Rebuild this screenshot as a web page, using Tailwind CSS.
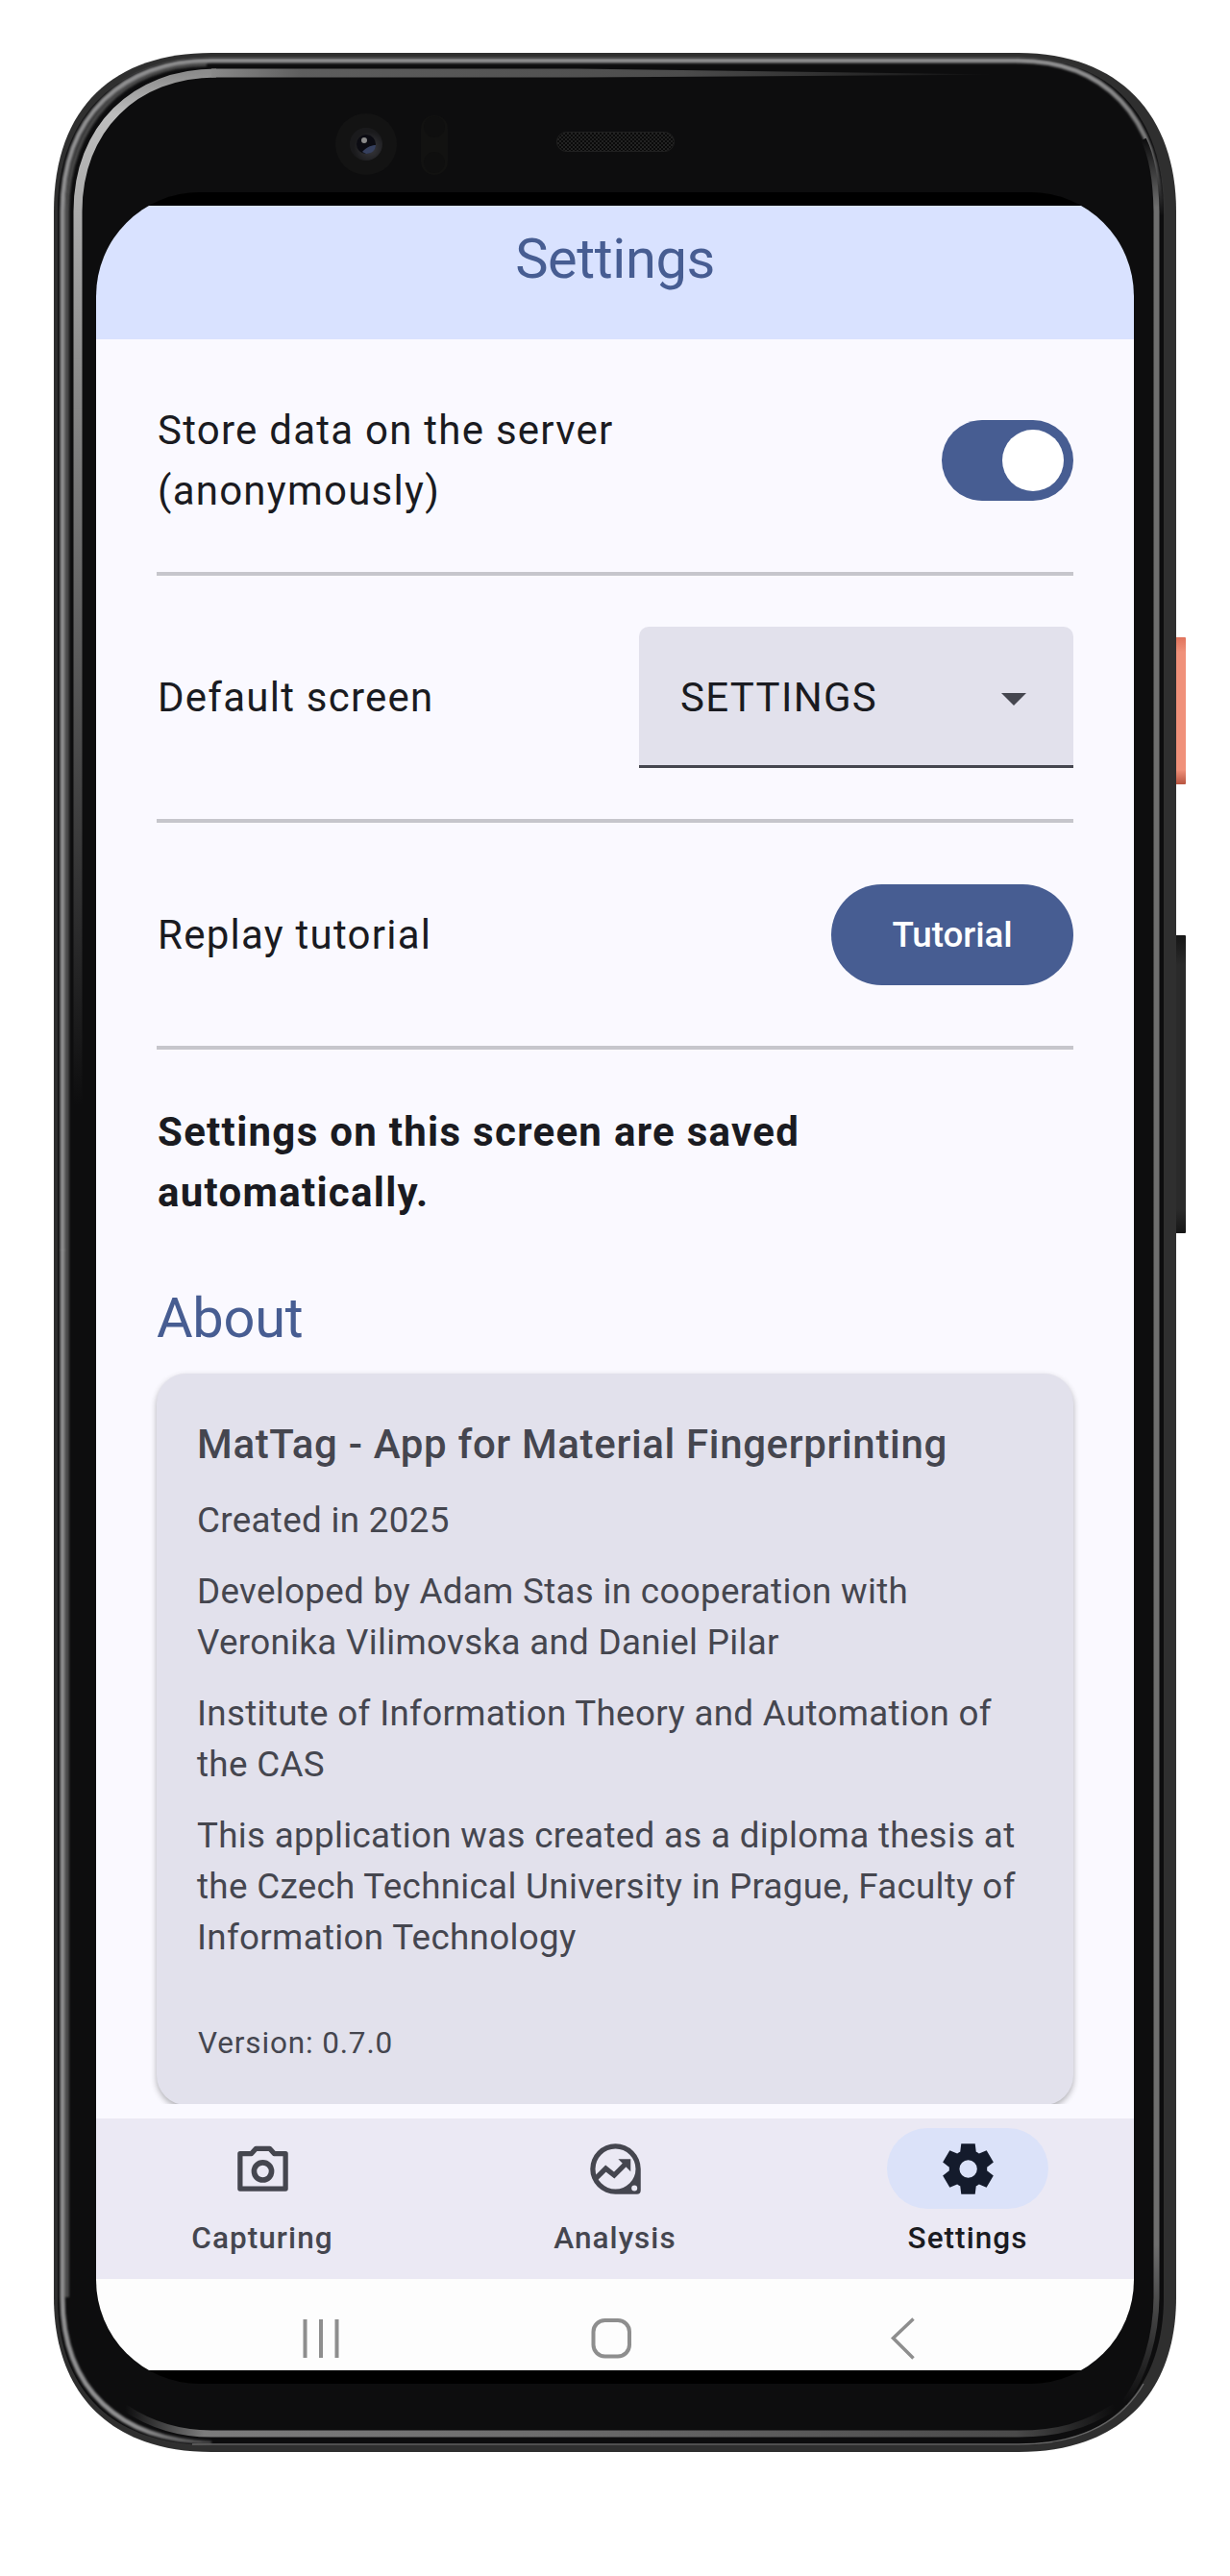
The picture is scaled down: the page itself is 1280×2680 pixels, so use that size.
<!DOCTYPE html>
<html lang="en">
<head>
<meta charset="utf-8">
<title>Settings</title>
<script src="https://cdn.jsdelivr.net/npm/@tailwindcss/browser@4"></script>
</head>
<body class="bg-white font-['Roboto',sans-serif]">
<div class="relative w-[1280px] h-[2680px] overflow-hidden bg-white">

  <!-- Device body: side buttons, frame and reflections -->
  <svg class="absolute inset-0" width="1280" height="2680" viewBox="0 0 1280 2680" fill="none">
    <defs>
      <linearGradient id="power" x1="0" y1="663" x2="0" y2="816" gradientUnits="userSpaceOnUse">
        <stop offset="0" stop-color="#e0735c"/><stop offset=".1" stop-color="#f0917a"/><stop offset=".9" stop-color="#f0917a"/><stop offset="1" stop-color="#b85440"/>
      </linearGradient>
      <linearGradient id="volume" x1="0" y1="973" x2="0" y2="1283" gradientUnits="userSpaceOnUse">
        <stop offset="0" stop-color="#161616"/><stop offset=".1" stop-color="#2a2a2a"/><stop offset=".92" stop-color="#2a2a2a"/><stop offset="1" stop-color="#161616"/>
      </linearGradient>
      <linearGradient id="rimRight" x1="0" y1="70" x2="0" y2="225" gradientUnits="userSpaceOnUse">
        <stop offset="0" stop-color="#8f8f90"/><stop offset=".5" stop-color="#777"/><stop offset="1" stop-color="#777" stop-opacity="0"/>
      </linearGradient>
      <linearGradient id="rimLeft" x1="65" y1="0" x2="225" y2="0" gradientUnits="userSpaceOnUse">
        <stop offset="0" stop-color="#8f8f90"/><stop offset=".5" stop-color="#8f8f90"/><stop offset="1" stop-color="#8f8f90" stop-opacity="0"/>
      </linearGradient>
      <linearGradient id="leftInner" x1="0" y1="76" x2="0" y2="1150" gradientUnits="userSpaceOnUse">
        <stop offset="0" stop-color="#8c8c8c"/><stop offset=".04" stop-color="#bdbdbd"/><stop offset=".3" stop-color="#8a8a8a"/><stop offset="1" stop-color="#0d0d0e"/>
      </linearGradient>
      <linearGradient id="topInner" x1="215" y1="0" x2="1040" y2="0" gradientUnits="userSpaceOnUse">
        <stop offset="0" stop-color="#8c8c8c"/><stop offset=".12" stop-color="#5e5e5e"/><stop offset=".6" stop-color="#4c4c4c"/><stop offset="1" stop-color="#0d0d0e"/>
      </linearGradient>
      <linearGradient id="bottomInner" x1="130" y1="0" x2="1160" y2="0" gradientUnits="userSpaceOnUse">
        <stop offset="0" stop-color="#0d0d0e"/><stop offset=".08" stop-color="#7c7c7c"/><stop offset=".4" stop-color="#6e6e6e"/><stop offset=".9" stop-color="#4a4a4a"/><stop offset="1" stop-color="#0d0d0e"/>
      </linearGradient>
      <linearGradient id="rightInner" x1="0" y1="145" x2="0" y2="2500" gradientUnits="userSpaceOnUse">
        <stop offset="0" stop-color="#0d0d0e"/><stop offset=".03" stop-color="#6e6e6e"/><stop offset=".93" stop-color="#6e6e6e"/><stop offset="1" stop-color="#0d0d0e"/>
      </linearGradient>
      <pattern id="mesh" width="4" height="4" patternUnits="userSpaceOnUse">
        <rect width="4" height="4" fill="#0a0a0a"/><rect width="2" height="2" fill="#222"/><rect x="2" y="2" width="2" height="2" fill="#222"/>
      </pattern>
      <radialGradient id="lens" cx=".62" cy=".62" r=".5"><stop offset="0" stop-color="#3a3a3f"/><stop offset="1" stop-color="#1a1a1c"/></radialGradient>
      <filter id="soft" x="-20%" y="-20%" width="140%" height="140%"><feGaussianBlur stdDeviation="1.2"/></filter>
    </defs>
    <rect x="1222" y="663" width="12" height="153" rx="1" fill="url(#power)"/>
    <rect x="1222" y="973" width="12" height="310" rx="1" fill="url(#volume)"/>
    <path d="M56 220C56 110 120 55 220 55H1060C1165 55 1224 120 1224 220V2390C1224 2490 1165 2551 1060 2551H220C115 2551 56 2490 56 2390Z" fill="#2f2f2f"/>
    <path d="M60 220C60 118 125 60 220 60H1060C1155 60 1211 120 1211 220V2390C1211 2490 1150 2544 1060 2544H220C120 2544 60 2490 60 2390Z" fill="#0d0d0e"/>
    <g filter="url(#soft)">
      <path d="M220 2541C126 2540 65 2486 65 2390V220C65 120 128 63 220 63" stroke="#8f8f90" stroke-width="1"/>
      <path d="M220 2541C126 2540 65 2486 65 2390V1300" stroke="url(#rimLeft)" stroke-width="5"/>
      <path d="M65 1301V220C65 120 128 63 220 63H1060" stroke="#8f8f90" stroke-width="5"/>
      <path d="M1059 63C1148 63 1206 120 1209 225" stroke="url(#rimRight)" stroke-width="5"/>
      <path d="M70 2390V220C70 128 130 67 215 67" stroke="#4a4a4a" stroke-width="4"/>
    </g>
    <path d="M200 2543H1060C1130 2543 1170 2515 1190 2480" stroke="#666" stroke-width="1.5"/>
    <path d="M81 1150V220C81 134 140 76 225 76" stroke="url(#leftInner)" stroke-width="9"/>
    <path d="M220 71.500H600L1040 77.500L600 80.500H220Z" fill="url(#topInner)"/>
    <path d="M1190 145C1200 165 1203 190 1203.500 220V2390C1203 2430 1192 2470 1170 2500" stroke="url(#rightInner)" stroke-width="6"/>
    <path d="M130 2505C160 2525 190 2532 220 2532H1060C1100 2532 1130 2524 1160 2504" stroke="url(#bottomInner)" stroke-width="7"/>
    <circle cx="381" cy="150" r="32" fill="#131313"/>
    <circle cx="381" cy="150" r="17" fill="url(#lens)"/>
    <circle cx="381" cy="150" r="10" fill="#0b0b12"/>
    <path d="M377 158C382 152 388 151 391 151C391 156 387 160 381 160Z" fill="#36405e"/>
    <circle cx="379" cy="146" r="3" fill="#8a8a8a"/>
    <rect x="438" y="120" width="28" height="62" rx="14" fill="#121211"/>
    <circle cx="452" cy="132" r="11" fill="#0f0f0f"/><circle cx="452" cy="169" r="11" fill="#0f0f0f"/>
    <rect x="579.500" y="137.500" width="122" height="20" rx="10" fill="url(#mesh)" stroke="#202020"/>
  </svg>

  <!-- Display -->
  <div class="absolute left-[100px] top-[200px] w-[1080px] h-[2280px] rounded-[108px] overflow-hidden bg-black py-[14px] flex flex-col">
    <header class="h-[139px] shrink-0 bg-[#d9e2ff] flex justify-center pt-[20px]">
      <h1 class="text-[57.750px] leading-[70px] tracking-[-0.400px] text-[#475d92]">Settings</h1>
    </header>

    <main class="h-[1851px] shrink-0 bg-[#faf9ff] px-[63px] text-[#1a1b21]">
      <div class="h-[1836px] -mx-[20px] px-[20px] overflow-hidden">
      <section class="h-[246px] pt-[10px] border-b-4 border-[#c6c6cc] flex items-center justify-between">
        <p class="pl-px text-[42px] leading-[63px] tracking-[1.250px]">Store data on the server<br>(anonymously)</p>
        <div class="w-[137px] h-[84px] rounded-full bg-[#475d92] p-[10px] flex justify-end"><span class="size-[64px] rounded-full bg-white"></span></div>
      </section>
      <section class="h-[257px] border-b-4 border-[#c6c6cc] flex items-center justify-between">
        <p class="pl-px text-[42px] leading-[63px] tracking-[1.250px]">Default screen</p>
        <div class="w-[452px] h-[147px] rounded-t-[10px] bg-[#e2e1ec] border-b-[3px] border-[#45464f] pt-[2px] pl-[43px] pr-[49px] flex items-center justify-between">
          <span class="text-[42px] leading-[63px] tracking-[1.310px]">SETTINGS</span>
          <svg class="mt-1" width="26" height="13" viewBox="0 0 26 13"><path d="M0 0H26L13 13Z" fill="#45464f"/></svg>
        </div>
      </section>
      <section class="h-[236px] border-b-4 border-[#c6c6cc] flex items-center justify-between">
        <p class="pl-px text-[42px] leading-[63px] tracking-[1.250px]">Replay tutorial</p>
        <div class="w-[252px] h-[105px] pt-px rounded-full bg-[#475d92] flex items-center justify-center text-[36.750px] font-medium tracking-[-0.080px] text-white">Tutorial</div>
      </section>
      <p class="pl-px mt-[54px] text-[42px] leading-[63px] tracking-[1.290px] font-bold">Settings on this screen are saved<br>automatically.</p>
      <h2 class="mt-[62px] text-[57.750px] leading-[74px] tracking-[-0.300px] text-[#475d92]">About</h2>
      <article class="mt-[21px] h-[761px] rounded-[31px] bg-[#e2e1ec] shadow-[0_3px_6px_rgba(0,0,0,0.3)] px-[42px] pt-[42px] text-[#45464f]">
        <h3 class="text-[42px] leading-[63px] font-medium tracking-[0.650px]">MatTag - App for Material Fingerprinting</h3>
        <div class="mt-[21px] flex flex-col gap-[21px] text-[36.750px] leading-[53px] tracking-[0.320px] whitespace-nowrap">
          <p>Created in 2025</p>
          <p>Developed by Adam Stas in cooperation with<br>Veronika Vilimovska and Daniel Pilar</p>
          <p>Institute of Information Theory and Automation of<br>the CAS</p>
          <p>This application was created as a diploma thesis at<br>the Czech Technical University in Prague, Faculty of<br>Information Technology</p>
        </div>
        <p class="pl-px mt-[63px] text-[31.500px] leading-[42px] tracking-[0.850px]">Version: 0.7.0</p>
      </article>
      </div>
    </main>

    <nav class="h-[167px] shrink-0 bg-[#ebe9f4] flex gap-[21px] pt-[10px] text-[31.500px] leading-[42px] tracking-[1.050px] font-medium text-[#45464f]">
      <div class="flex-1 flex flex-col items-center gap-[10px]">
        <div class="w-[168px] h-[84px] flex items-center justify-center">
          <svg width="63" height="63" viewBox="0 0 24 24" fill="none" stroke="currentColor" stroke-width="2" stroke-linejoin="round"><path d="M3 5.950H7.500L9.300 3.950H14.700L16.500 5.950H21V19.850H3Z"/><circle cx="12" cy="12.950" r="3.450" stroke-width="2.150"/></svg>
        </div>
        <span>Capturing</span>
      </div>
      <div class="flex-1 flex flex-col items-center gap-[10px]">
        <div class="w-[168px] h-[84px] flex items-center justify-center">
          <svg width="63" height="63" viewBox="0 0 24 24" fill="none" stroke="currentColor"><path fill="currentColor" stroke="none" fill-rule="evenodd" d="M12 2a10 10 0 1 0 0 20h8.500a1.500 1.500 0 0 0 1.500-1.500V12A10 10 0 0 0 12 2Zm0 2a8 8 0 1 1 0 16 8 8 0 0 1 0-16Zm7.500 14.500a1.150 1.150 0 1 1 0 2.300 1.150 1.150 0 0 1 0-2.300Z"/><path d="M4.300 15.700 8.150 11.850 11.500 14.500 16.600 9.400" stroke-width="2"/><path d="M13.100 8.100h4.900V13L16.300 11.300 14.700 9.700Z" fill="currentColor" stroke="none"/></svg>
        </div>
        <span>Analysis</span>
      </div>
      <div class="flex-1 flex flex-col items-center gap-[10px] text-[#1a1b21]">
        <div class="w-[168px] h-[84px] rounded-full bg-[#dbe2f9] flex items-center justify-center text-[#141b2c]">
          <svg width="63" height="63" viewBox="0 0 24 24" fill="currentColor"><path d="m9.250 22-.4-3.200q-.325-.125-.612-.3-.288-.175-.563-.375L4.700 19.375l-2.750-4.750 2.575-1.950Q4.500 12.500 4.500 12.338v-.675q0-.163.025-.338L1.950 9.375l2.750-4.750 2.975 1.250q.275-.2.575-.375.300-.175.600-.3l.4-3.200h5.500l.4 3.200q.325.125.612.300.288.175.563.375l2.975-1.250 2.750 4.750-2.575 1.950q.025.175.025.338v.675q0 .162-.05.337l2.575 1.950-2.750 4.750-2.950-1.250q-.275.200-.575.375-.300.175-.6.300l-.4 3.200Zm2.800-6.500q1.450 0 2.475-1.025Q15.550 13.450 15.550 12q0-1.450-1.025-2.475Q13.500 8.500 12.050 8.500q-1.475 0-2.488 1.025Q8.550 10.550 8.550 12q0 1.450 1.012 2.475Q10.575 15.500 12.050 15.500Z"/></svg>
        </div>
        <span>Settings</span>
      </div>
    </nav>

    <!-- System navigation -->
    <div class="h-[95px] shrink-0 bg-[#fdfdfd]">
      <svg width="1080" height="95" viewBox="100 2371 1080 95" fill="none" stroke="#8e8e8e" stroke-width="4">
        <path d="M317.500 2413V2453M334 2413V2453M350.500 2413V2453"/>
        <rect x="617.500" y="2414" width="37.500" height="37.500" rx="12"/>
        <path d="M950.500 2412.500 929.500 2432.500 950.500 2453.500" stroke-width="3.500"/>
      </svg>
    </div>
  </div>
</div>
</body>
</html>
